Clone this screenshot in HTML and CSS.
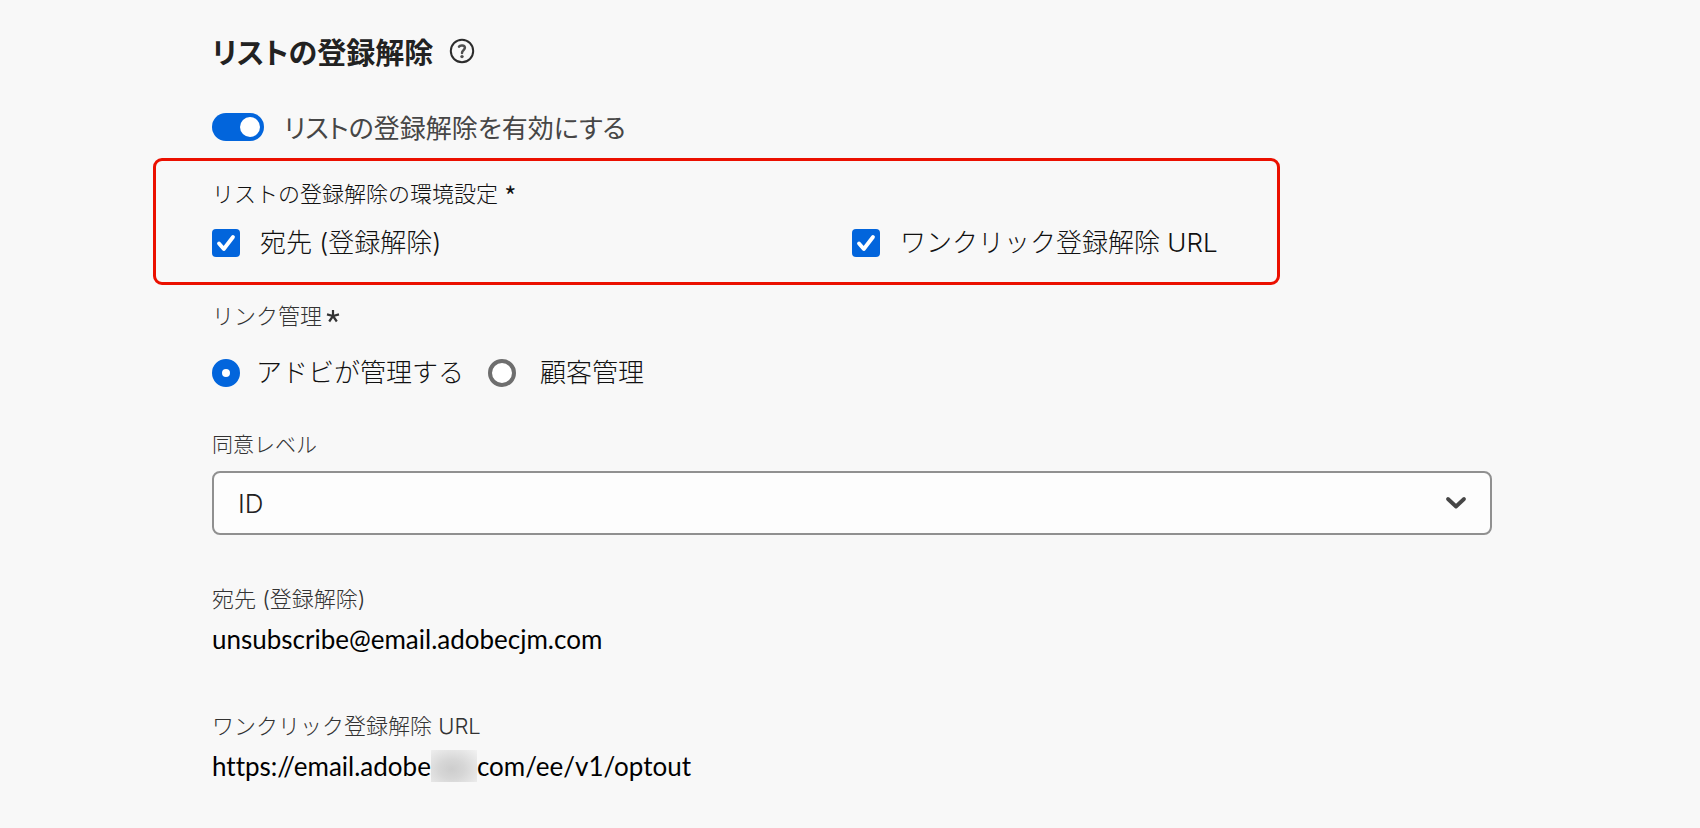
FILE: index.html
```html
<!DOCTYPE html>
<html lang="ja">
<head>
<meta charset="utf-8">
<meta name="viewport" content="width=device-width, initial-scale=1">
<title>リストの登録解除</title>
<link rel="stylesheet" href="styles.css">
</head>
<body>
<main class="panel">
  <header class="heading">
    <h1 class="title">リストの登録解除</h1>
    <button class="help" type="button" aria-label="ヘルプ">
      <svg viewBox="0 0 26 26" width="26" height="26" aria-hidden="true">
        <circle cx="13" cy="13" r="11.2" fill="none" stroke="#2c2c2c" stroke-width="2"/>
        <path d="M10 8.6C10.8 7 15.9 6.6 15.9 9.8C15.9 12 13 12.3 13 15" fill="none" stroke="#505050" stroke-width="2.5" stroke-linecap="round" stroke-linejoin="round"/>
        <circle cx="13" cy="18.6" r="1.7" fill="#505050"/>
      </svg>
    </button>
  </header>

  <label class="switch-row">
    <input class="switch" type="checkbox" role="switch" checked>
    <span class="switch-text">リストの登録解除を有効にする</span>
  </label>

  <section class="highlight" role="group" aria-labelledby="pref-label">
    <div class="field-label dark" id="pref-label">リストの登録解除の環境設定 <span class="star">*</span></div>
    <div class="checks">
      <label class="choice">
        <span class="box">
          <input class="check" type="checkbox" checked>
          <svg class="tick" viewBox="0 0 28 28" aria-hidden="true"><path d="M7 14.5L11.8 20L21 8" fill="none" stroke="#fff" stroke-width="3.8" stroke-linecap="round" stroke-linejoin="round"/></svg>
        </span>
        <span class="choice-text">宛先 (登録解除)</span>
      </label>
      <label class="choice">
        <span class="box">
          <input class="check" type="checkbox" checked>
          <svg class="tick" viewBox="0 0 28 28" aria-hidden="true"><path d="M7 14.5L11.8 20L21 8" fill="none" stroke="#fff" stroke-width="3.8" stroke-linecap="round" stroke-linejoin="round"/></svg>
        </span>
        <span class="choice-text">ワンクリック登録解除 URL</span>
      </label>
    </div>
  </section>

  <section class="links" role="radiogroup" aria-labelledby="link-label">
    <div class="field-label with-star" id="link-label">リンク管理<svg class="asterisk" viewBox="0 0 14 14" width="14" height="14" role="img" aria-label="必須"><path d="M7 7V1M7 7L1 5.4M7 7L13 5.4M7 7L3.2 12.5M7 7L10.8 12.5" fill="none" stroke="#333" stroke-width="2.2"/></svg></div>
    <div class="radios">
      <label class="choice"><input class="radio" type="radio" name="manager" checked><span class="choice-text">アドビが管理する</span></label>
      <label class="choice wide"><input class="radio" type="radio" name="manager"><span class="choice-text">顧客管理</span></label>
    </div>
  </section>

  <section class="consent">
    <label class="field-label small" for="level">同意レベル</label>
    <div class="select-wrap">
      <select class="select" id="level"><option>ID</option></select>
      <svg class="chevron" viewBox="0 0 22 14" aria-hidden="true"><path d="M3 3L11 10.5L19 3" fill="none" stroke="#464646" stroke-width="3.8" stroke-linecap="round" stroke-linejoin="round"/></svg>
    </div>
  </section>

  <dl class="details">
    <div class="detail">
      <dt class="field-label">宛先 (登録解除)</dt>
      <dd class="value">unsubscribe@email.adobecjm.com</dd>
    </div>
    <div class="detail">
      <dt class="field-label">ワンクリック登録解除 URL</dt>
      <dd class="value">https://email.adobe<span class="redacted"></span>com/ee/v1/optout</dd>
    </div>
  </dl>
</main>
</body>
</html>
```
FILE: styles.css
```css
* { box-sizing: border-box; }

body {
  margin: 0;
  background: #f8f8f8;
  color: #222;
  font-family: "Noto Sans CJK JP", sans-serif;
}

.panel {
  display: flex;
  flex-direction: column;
  padding: 31px 208px 36px 212px;
}

.heading {
  display: flex;
  align-items: center;
  gap: 16px;
  height: 40px;
}

.title {
  margin: 0;
  font-size: 29px;
  font-weight: 700;
  line-height: 40px;
  font-feature-settings: "palt";
}

.help {
  display: flex;
  padding: 0;
  border: 0;
  background: none;
}

.switch-row {
  display: flex;
  align-items: center;
  align-self: flex-start;
  gap: 20px;
  height: 40px;
  margin-top: 36px;
}

.switch {
  appearance: none;
  display: flex;
  align-items: center;
  justify-content: flex-end;
  width: 52px;
  height: 28px;
  margin: 0;
  padding: 4px;
  border-radius: 14px;
  background: #0265dc;
}

.switch::before {
  content: "";
  width: 20px;
  height: 20px;
  border-radius: 50%;
  background: #fff;
}

.switch-text {
  color: #464646;
  font-size: 26px;
  line-height: 40px;
  font-feature-settings: "palt";
}

.highlight {
  margin: 11px 212px 0 -59px;
  padding: 19px 0 19px 56px;
  border: 3px solid #eb1000;
  border-radius: 9px;
}

.field-label {
  display: block;
  color: #333;
  font-family: Inter, "Noto Sans CJK JP", sans-serif;
  font-size: 22px;
  font-weight: 300;
  line-height: 28px;
}

.dark { color: #111; }

.small { font-size: 21px; }

.star {
  color: #111;
  font-family: "Noto Sans CJK JP", sans-serif;
  font-size: 26px;
  font-weight: 400;
  line-height: 20px;
  vertical-align: -4px;
}

.checks {
  display: grid;
  grid-template-columns: 640px 1fr;
  margin-top: 15px;
}

.choice {
  display: flex;
  align-items: center;
  gap: 20px;
  min-height: 40px;
}

.choice-text {
  color: #111;
  font-family: Inter, "Noto Sans CJK JP", sans-serif;
  font-size: 26px;
  font-weight: 300;
  line-height: 40px;
}

.box {
  position: relative;
  flex: none;
  width: 28px;
  height: 28px;
}

.check {
  appearance: none;
  display: block;
  width: 28px;
  height: 28px;
  margin: 0;
  border-radius: 4px;
  background: #0265dc;
}

.tick {
  position: absolute;
  inset: 0;
  pointer-events: none;
}

.links { margin-top: 17px; }

.with-star {
  display: flex;
  align-items: center;
  gap: 4px;
}

.radios {
  display: flex;
  gap: 24px;
  margin-top: 23px;
}

.radios .choice { gap: 16px; }
.radios .wide { gap: 24px; }

.radio {
  appearance: none;
  flex: none;
  width: 28px;
  height: 28px;
  margin: 0;
  border: 4px solid #6e6e6e;
  border-radius: 50%;
  background: #fff;
}

.radio:checked {
  border-width: 10px;
  border-color: #0265dc;
}

.consent { margin-top: 38px; }

.select-wrap {
  position: relative;
  margin-top: 12px;
}

.select {
  appearance: none;
  display: block;
  width: 100%;
  height: 64px;
  padding: 0 60px 0 24px;
  border: 2px solid #909090;
  border-radius: 8px;
  background: #fdfdfd;
  color: #222;
  font-family: Inter, "Noto Sans CJK JP", sans-serif;
  font-size: 26px;
  font-weight: 300;
}

.chevron {
  position: absolute;
  top: 25px;
  right: 25px;
  width: 22px;
  height: 14px;
  pointer-events: none;
}

.details {
  display: flex;
  flex-direction: column;
  gap: 55px;
  margin: 50px 0 0;
}

.value {
  display: flex;
  align-items: center;
  margin: 8px 0 0;
  color: #000;
  font-family: Lato, "Noto Sans CJK JP", sans-serif;
  font-size: 26px;
  font-variant-ligatures: none;
  line-height: 36px;
}

.redacted {
  width: 46px;
  height: 32px;
  background: radial-gradient(ellipse at 45% 60%, #cdcdcd 0%, #d6d6d6 35%, #f2f2f2 100%);
}
```
